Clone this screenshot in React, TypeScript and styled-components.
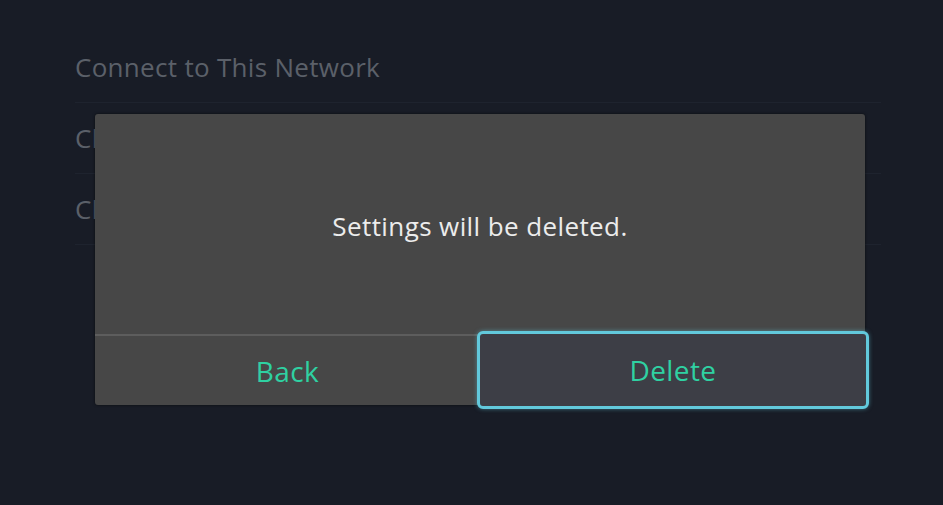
import React from 'react';
import styled, { createGlobalStyle } from 'styled-components';

const Global = createGlobalStyle`
  html, body {
    margin: 0;
    padding: 0;
    background: #181c26;
  }
  body {
    font-family: "Open Sans", "Noto Sans", sans-serif;
  }
`;

const Screen = styled.div`
  position: relative;
  width: 943px;
  height: 505px;
  overflow: hidden;
  background: #181c26;
`;

const List = styled.ul`
  list-style: none;
  margin: 0;
  padding: 32px 62px 0 75px;
`;

const Row = styled.li`
  height: 70px;
  display: flex;
  align-items: center;
  border-bottom: 1px solid #1e232e;
  color: #5b6069;
  font-size: 26px;
  letter-spacing: 0.3px;
`;

const Dialog = styled.div`
  position: absolute;
  left: 95px;
  top: 114px;
  width: 770px;
  height: 291px;
  background: #474747;
  border-radius: 3px;
  box-shadow: 0 0 3px rgba(0, 0, 0, 0.6);
  display: flex;
  flex-direction: column;
`;

const Message = styled.div`
  height: 222px;
  padding-top: 4px;
  display: flex;
  align-items: center;
  justify-content: center;
  color: #ececec;
  font-size: 26px;
  letter-spacing: 0.4px;
  border-bottom: 2px solid #5d5d5d;
  box-sizing: border-box;
`;

const Buttons = styled.div`
  flex: 1;
  display: grid;
  grid-template-columns: 1fr 1fr;
`;

const Button = styled.button<{ $selected?: boolean }>`
  font-family: inherit;
  font-size: 28px;
  letter-spacing: 0.4px;
  color: #2fd1a2;
  background: ${(p) => (p.$selected ? '#3d3e46' : 'transparent')};
  border: ${(p) => (p.$selected ? '3px solid #62c9dc' : 'none')};
  border-radius: ${(p) => (p.$selected ? '6px' : '0')};
  margin: ${(p) => (p.$selected ? '-5px -4px -4px -3px' : '0')};
  box-shadow: ${(p) => (p.$selected ? '0 0 4px rgba(98, 201, 220, 0.5)' : 'none')};
  padding: 0;
  cursor: pointer;
  position: relative;
`;

export default function App() {
  return (
    <Screen>
      <Global />
      <List>
        <Row>Connect to This Network</Row>
        <Row>Change Settings</Row>
        <Row>Clear Settings</Row>
      </List>
      <Dialog>
        <Message>Settings will be deleted.</Message>
        <Buttons>
          <Button>Back</Button>
          <Button $selected>Delete</Button>
        </Buttons>
      </Dialog>
    </Screen>
  );
}
